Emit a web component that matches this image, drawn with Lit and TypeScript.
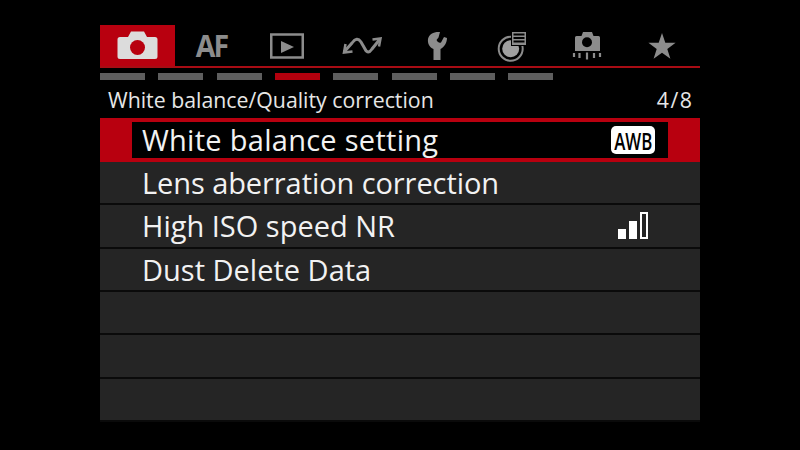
import { LitElement, html, css, svg } from "lit";
import { customElement } from "lit/decorators.js";

const G = "#8c8c8c";
const camera = svg`<svg viewBox="0 0 75 41" width="75" height="41"><path fill="#dcdcdc" d="M20 12h8l3-5.500h13l3 5.500h8a2.500 2.500 0 0 1 2.500 2.500v17a2.500 2.500 0 0 1-2.500 2.500H20a2.500 2.500 0 0 1-2.500-2.500v-17A2.500 2.500 0 0 1 20 12z"/><circle cx="37.500" cy="22.500" r="7.500" fill="#b8000f"/></svg>`;
const play = svg`<svg viewBox="0 0 75 41" width="75" height="41"><rect x="21.250" y="9.500" width="31.500" height="23" fill="none" stroke="${G}" stroke-width="2.500"/><path d="M31 16l13 6-13 6z" fill="${G}"/></svg>`;
const wave = svg`<svg viewBox="0 0 75 41" width="75" height="41"><path fill="none" stroke="${G}" stroke-width="3" d="M19 27L27 18Q32 11 36 17L40 24Q43 30 47 24L55 14"/><path fill="none" stroke="${G}" stroke-width="2.500" d="M20.500 19L19 27.500L27.500 26.500M47.500 14.500L55.500 13.500L54 21.500"/></svg>`;
const wrench = svg`<svg viewBox="0 0 75 41" width="75" height="41"><path fill="${G}" d="M33.500 35V24C29 22 27.500 18 28 14C29 9 34 6.500 40 7L38.500 12.500L36.500 15Q38 18.500 41 17.500L44 12L47 13C47 18 44 22 40.500 24V35z"/></svg>`;
const chart = svg`<svg viewBox="0 0 75 41" width="75" height="41"><circle cx="35.700" cy="23.700" r="12" fill="none" stroke="${G}" stroke-width="2"/><circle cx="35.700" cy="23.700" r="8.500" fill="#a0a0a0"/><rect x="36" y="6" width="16" height="15" fill="#000"/><path fill="${G}" fill-rule="evenodd" d="M37 7h14v13H37zM38.500 8.500v2h11v-2zM38.500 12v2h11v-2zM38.500 15.500v2h11v-2z"/></svg>`;
const sensor = svg`<svg viewBox="0 0 75 41" width="75" height="41"><path fill="${G}" d="M26.500 11h5l1.500-4h9l1.500 4h5a1.500 1.500 0 0 1 1.500 1.500V26H25V12.500A1.500 1.500 0 0 1 26.500 11z"/><circle cx="37" cy="17.300" r="5" fill="#000"/><path stroke="${G}" stroke-width="2.200" fill="none" d="M24 28v4M29.500 28v5M37 27.500v7M44 28v5M50 28v4"/></svg>`;
const star = svg`<svg viewBox="0 0 75 41" width="75" height="41"><path fill="${G}" d="M37 8l3.300 9.800h10.300l-8.300 6.100 3.100 9.800-8.400-6-8.400 6 3.100-9.800-8.300-6.100h10.300z"/></svg>`;

const dashes = [0, 1, 2, 3, 4, 5, 6, 7];

@customElement("app-root")
export class AppRoot extends LitElement {
  static styles = css`
    :host { display: block; width: 800px; height: 450px; background: #000; font-family: "Open Sans", sans-serif; overflow: hidden; }
    .menu { width: 600px; margin-left: 100px; padding-top: 25px; color: #f2f2f2; }
    .tabs { display: flex; height: 41px; border-bottom: 2px solid #a80c14; }
    .tab { width: 75px; display: flex; align-items: center; justify-content: center; color: #8c8c8c; }
    .tab svg { display: block; }
    .tab.on { background: #b8000f; }
    .af { font-weight: 700; font-size: 30px; letter-spacing: -2px; line-height: 41px; margin-right: 2px; transform: scaleX(.95); }
    .dashes { display: flex; gap: 13.33px; margin-top: 5px; }
    .dash { width: 45px; height: 7px; background: #5e5e5e; }
    .dash.on { background: #b3000d; }
    .head { height: 38px; display: flex; align-items: center; justify-content: space-between; padding: 0 8px; font-size: 21.3px; color: #e6e6e6; }
    .count { letter-spacing: 1.500px; margin-right: -1.500px; }
    .rows { height: 304px; display: grid; grid-template-rows: 44px repeat(6, 1fr); background: #000; }
    .row { background: #252525; border-bottom: 2px solid #0a0a0a; display: flex; align-items: center; padding-left: 42px; font-size: 29px; }
    .row.sel { background: #b8000f; border: 0; padding: 4px 32px; }
    .row.tight { letter-spacing: -.08px; }
    .inner { flex: 1; background: #000; align-self: stretch; display: flex; align-items: center; justify-content: space-between; padding: 0 13px 0 10px; }
    .label { letter-spacing: .28px; margin-top: -2px; }
    .awb { background: #fff; color: #000; border-radius: 5px; width: 44px; height: 28px; display: flex; align-items: center; justify-content: center; font-size: 24px; font-weight: 600; }
    .awb span { display: block; transform: scaleX(.7); }
    .bars { margin-left: auto; margin-right: 52px; display: flex; align-items: flex-end; gap: 3px; }
    .bar { display: block; width: 8px; background: #fff; box-sizing: border-box; }
    .bar.b1 { height: 10px; }
    .bar.b2 { height: 18px; }
    .bar.b3 { height: 27px; background: transparent; border: 2px solid #fff; }
  `;
  render() {
    return html`<div class="menu">
      <div class="tabs">
        <div class="tab on">${camera}</div>
        <div class="tab"><span class="af">AF</span></div>
        <div class="tab">${play}</div>
        <div class="tab">${wave}</div>
        <div class="tab">${wrench}</div>
        <div class="tab">${chart}</div>
        <div class="tab">${sensor}</div>
        <div class="tab">${star}</div>
      </div>
      <div class="dashes">${dashes.map((i) => html`<div class="dash ${i === 3 ? "on" : ""}"></div>`)}</div>
      <div class="head"><span>White balance/Quality correction</span><span class="count">4/8</span></div>
      <div class="rows">
        <div class="row sel"><div class="inner"><span class="label">White balance setting</span><span class="awb"><span>AWB</span></span></div></div>
        <div class="row tight">Lens aberration correction</div>
        <div class="row">High ISO speed NR<span class="bars"><i class="bar b1"></i><i class="bar b2"></i><i class="bar b3"></i></span></div>
        <div class="row">Dust Delete Data</div>
        <div class="row"></div>
        <div class="row"></div>
        <div class="row"></div>
      </div>
    </div>`;
  }
}
